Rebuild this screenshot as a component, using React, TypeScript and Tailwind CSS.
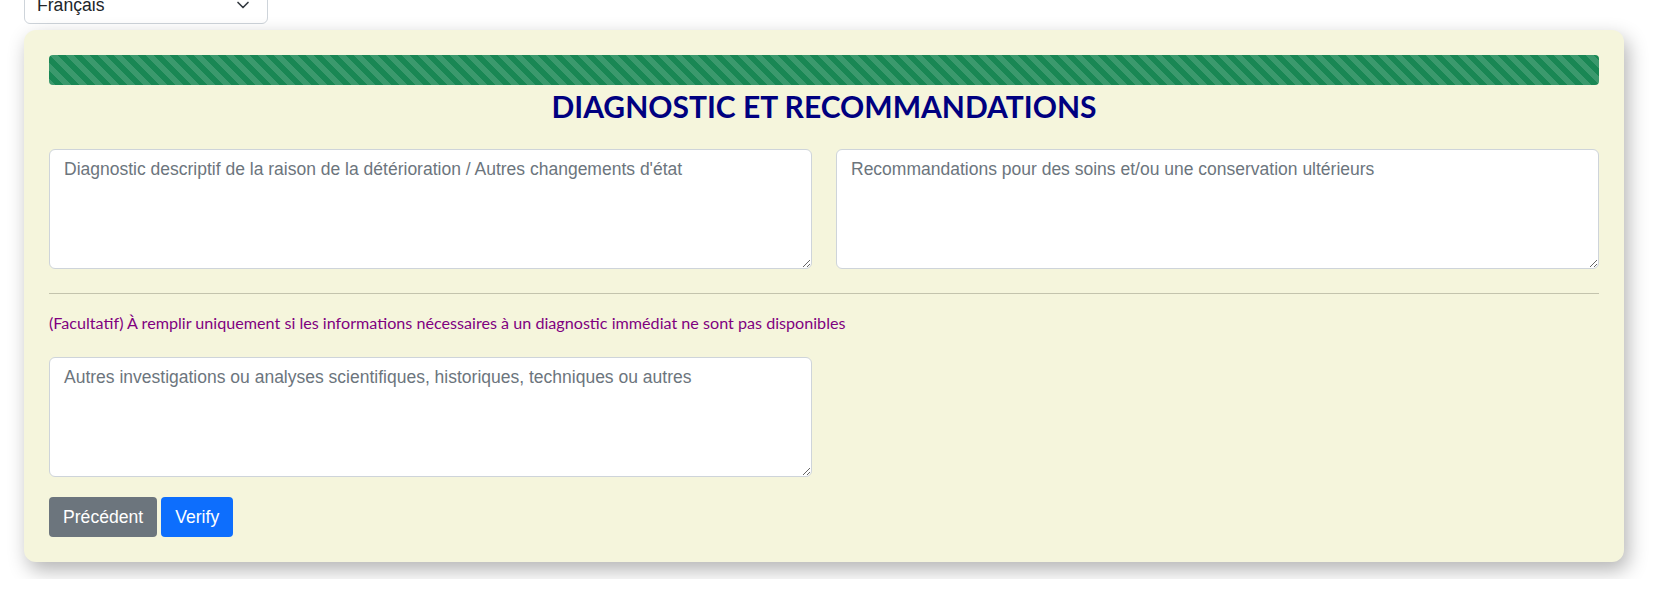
import { ChevronDown } from "lucide-react";

const STRIPES =
  "linear-gradient(45deg, rgba(255,255,255,.15) 25%, transparent 25%, transparent 50%, rgba(255,255,255,.15) 50%, rgba(255,255,255,.15) 75%, transparent 75%, transparent)";

function Field({ placeholder }: { placeholder: string }) {
  return (
    <textarea
      placeholder={placeholder}
      className="block h-[120px] w-full rounded-[6px] border border-[#ced4da] bg-white px-[14px] py-[6px] text-[17.5px] leading-[1.5] text-[#212529] placeholder:text-[#6c757d] focus:outline-none"
    />
  );
}

export default function App() {
  return (
    <div className="min-h-[593px] bg-white font-['Liberation_Sans',Arial,sans-serif]">
      {/* Language selector, partly scrolled out of view */}
      <div className="ml-[24px] -mt-[14px] flex h-[38px] w-[244px] items-center justify-between rounded-[6px] border border-[#ced4da] bg-white pl-3 pr-[14px] text-[17.6px] text-[#212529]">
        <span>Français</span>
        <ChevronDown className="h-5 w-5 text-[#343a40]" strokeWidth={2} />
      </div>

      <div className="ml-[24px] mt-[6px] w-[1600px] rounded-[12px] bg-[#f5f5dc] p-[25px] shadow-[4px_8px_20px_rgba(0,0,0,0.3)]">
        <div
          className="h-[30px] w-full rounded-[4px] bg-[#198754]"
          style={{ backgroundImage: STRIPES, backgroundSize: "16px 16px" }}
        />
        <h2 className="mt-[3px] text-center font-['Lato',sans-serif] text-[30px] font-bold leading-[1.2] text-[#000080]">
          DIAGNOSTIC ET RECOMMANDATIONS
        </h2>

        <div className="mt-[25px] grid grid-cols-2 gap-6">
          <Field placeholder="Diagnostic descriptif de la raison de la détérioration / Autres changements d'état" />
          <Field placeholder="Recommandations pour des soins et/ou une conservation ultérieurs" />
        </div>

        <hr className="mt-[24px] border-t border-[#c3c3ad]" />

        <p className="mt-[17px] font-['Lato',sans-serif] text-[16.15px] leading-6 text-[#800080]">
          (Facultatif) À remplir uniquement si les informations nécessaires à un diagnostic immédiat ne sont pas disponibles
        </p>

        <div className="mt-[22px] grid grid-cols-2 gap-6">
          <Field placeholder="Autres investigations ou analyses scientifiques, historiques, techniques ou autres" />
        </div>

        <div className="mt-[20px] flex gap-1">
          <button className="h-[40px] rounded-[4px] bg-[#6c757d] px-[14px] text-[17.6px] text-white">Précédent</button>
          <button className="h-[40px] rounded-[4px] bg-[#0d6efd] px-[14px] text-[17.6px] text-white">Verify</button>
        </div>
      </div>
    </div>
  );
}
